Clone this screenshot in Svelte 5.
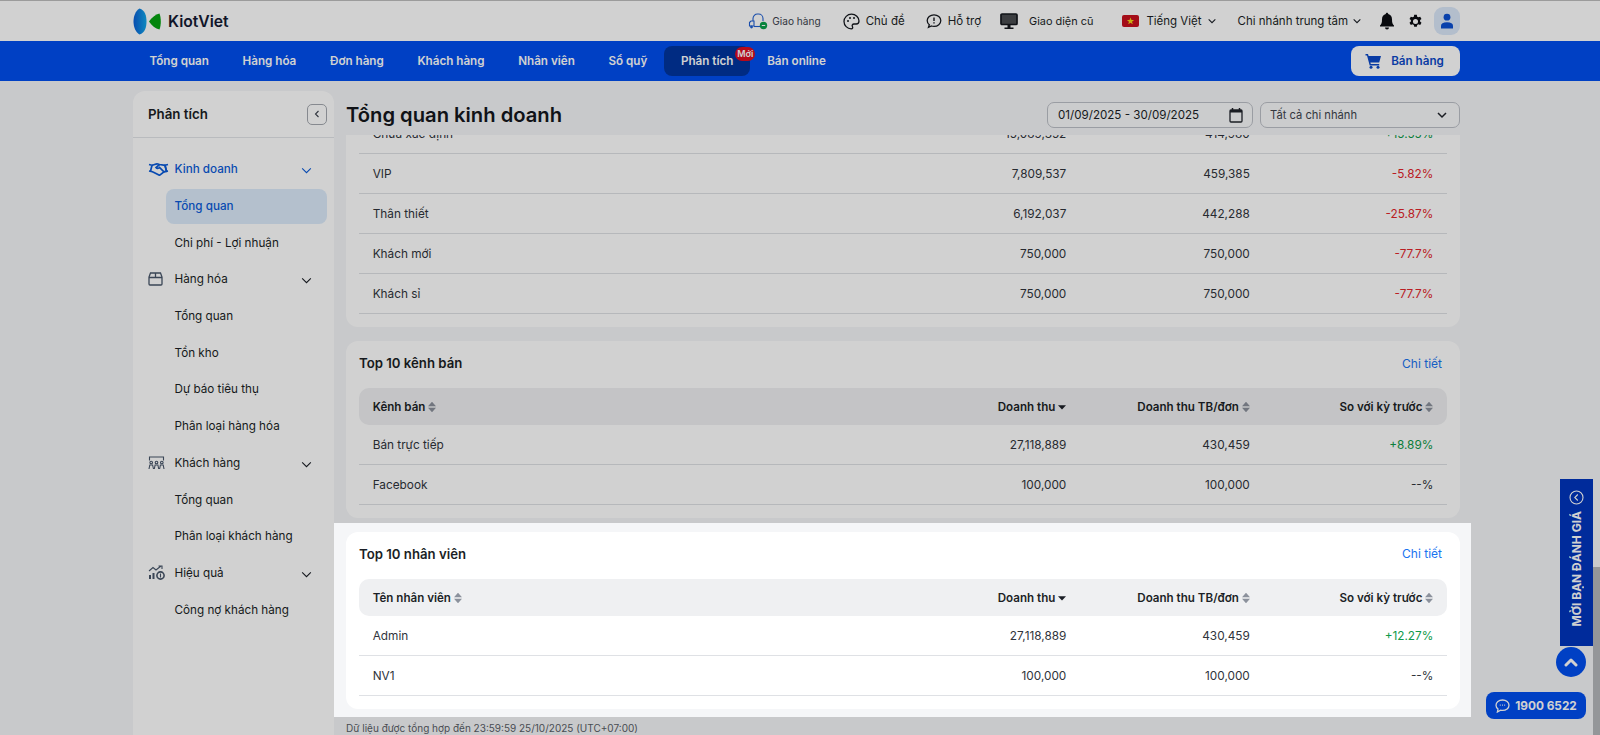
<script>
  const navItems = ['Tổng quan', 'Hàng hóa', 'Đơn hàng', 'Khách hàng', 'Nhân viên', 'Sổ quỹ', 'Phân tích', 'Bán online'];
  const menu = [
    { t: 'Kinh doanh', icon: 'shake', active: true, sub: [['Tổng quan', true], ['Chi phí - Lợi nhuận', false]] },
    { t: 'Hàng hóa', icon: 'box', sub: [['Tổng quan'], ['Tồn kho'], ['Dự báo tiêu thụ'], ['Phân loại hàng hóa']] },
    { t: 'Khách hàng', icon: 'group', sub: [['Tổng quan'], ['Phân loại khách hàng']] },
    { t: 'Hiệu quả', icon: 'chart', sub: [['Công nợ khách hàng']] }
  ];
  const cards = [
    { id: 'a', rows: [
      ['Chưa xác định', '15,089,352', '414,980', '+15.55%', 'up'],
      ['VIP', '7,809,537', '459,385', '-5.82%', 'down'],
      ['Thân thiết', '6,192,037', '442,288', '-25.87%', 'down'],
      ['Khách mới', '750,000', '750,000', '-77.7%', 'down'],
      ['Khách sỉ', '750,000', '750,000', '-77.7%', 'down']
    ] },
    { id: 'b', title: 'Top 10 kênh bán', head: 'Kênh bán', rows: [
      ['Bán trực tiếp', '27,118,889', '430,459', '+8.89%', 'up'],
      ['Facebook', '100,000', '100,000', '--%', '']
    ] },
    { id: 'c', title: 'Top 10 nhân viên', head: 'Tên nhân viên', rows: [
      ['Admin', '27,118,889', '430,459', '+12.27%', 'up'],
      ['NV1', '100,000', '100,000', '--%', '']
    ] }
  ];
</script>

{#snippet sort(active)}
  <svg class="sort" viewBox="0 0 8 12" aria-hidden="true">
    {#if active}
      <path d="M0 4.300h8L4 8.500z" fill="#1b1f26" />
    {:else}
      <path d="M0 5.300L4 .8l4 4.500zM0 6.700l4 4.500 4-4.500z" fill="#8b919c" />
    {/if}
  </svg>
{/snippet}

{#snippet chevron(cls)}
  <svg class={cls} viewBox="0 0 12 12" aria-hidden="true"><path d="M2 4l4 4 4-4" fill="none" stroke="currentColor" stroke-width="1.300" /></svg>
{/snippet}

<div class="page">
  <header class="top">
    <div class="logo">
      <svg width="28" height="27" viewBox="0 0 28 27" aria-hidden="true">
        <defs><linearGradient id="lens" x1="0" x2="1" y1="0" y2="0"><stop offset="0" stop-color="#0a5fd6" /><stop offset="1" stop-color="#12a8ea" /></linearGradient></defs>
        <path d="M6.500 0.500C2.500 3 0.500 8 0.500 13.500S2.500 24 6.500 26.500C12 25 13.500 19 13.500 13.500S12 2 6.500 0.500z" fill="url(#lens)" />
        <path d="M26.500 5.500C22.500 6.500 18.500 9.500 16 13.500c2.500 4 6.500 7 10.500 8 1-2.500 1.300-5.500 1.300-8s-.3-5.500-1.300-8z" fill="#05a311" />
      </svg>
      <span>KiotViet</span>
    </div>
    <div class="tools">
      <span class="tool small i1">
        <svg width="20" height="18" viewBox="0 0 20 18" aria-hidden="true"><path d="M5 9V6.500A4.500 4.500 0 0 1 9.500 2h1A4.500 4.500 0 0 1 15 6.500V9" fill="none" stroke="#1f5fd1" stroke-width="1.100" /><path d="M1.500 10.500l1.500-1.500h3v5H1.500z" fill="none" stroke="#1f5fd1" stroke-width="1.100" /><circle cx="3.500" cy="15" r="1.400" fill="#1f5fd1" /><path d="M6 14.500h6" stroke="#1f5fd1" stroke-width="1.100" /><circle cx="15.500" cy="13.500" r="3.700" fill="#0aa14a" /><path d="M13.800 13.500h3.400" stroke="#fff" /></svg>
        Giao hàng
      </span>
      <span class="tool i2">
        <svg width="17" height="17" viewBox="0 0 17 17" aria-hidden="true"><path d="M8.500 1.200C4.300 1.200 1 4.500 1 8.500s3.300 7.300 7.200 7.300c1.600 0 1.800-1.300 1.200-2.300-.7-1.200.1-2.500 1.500-2.500h2.300c1.700 0 2.800-1.300 2.800-3 0-3.500-3.300-6.800-7.500-6.800z" fill="none" stroke="#15181e" stroke-width="1.300" /><circle cx="5" cy="8" r="1" fill="#15181e" /><circle cx="7" cy="5" r="1" fill="#15181e" /><circle cx="11" cy="5" r="1" fill="#15181e" /></svg>
        Chủ đề
      </span>
      <span class="tool i3">
        <svg width="16" height="16" viewBox="0 0 16 16" aria-hidden="true"><path d="M8 1.800c-3.800 0-6.800 2.500-6.800 5.800 0 1.700.8 3.200 2.100 4.200l-.8 2.500 3-1.300c.8.300 1.600.4 2.500.4 3.800 0 6.800-2.600 6.800-5.800S11.800 1.800 8 1.800z" fill="none" stroke="#15181e" stroke-width="1.300" /><path d="M8 4.500v3.500M8 9.300v1.300" stroke="#15181e" stroke-width="1.400" /></svg>
        Hỗ trợ
      </span>
      <span class="tool i4">
        <svg width="18" height="17" viewBox="0 0 18 17" aria-hidden="true"><rect x="1" y="1" width="16" height="10.500" rx="1" fill="#4a4c50" stroke="#15181e" stroke-width="1.700" /><path d="M7.500 12h3v2.500h-3zM4.500 14.500h9V16h-9z" fill="#15181e" /></svg>
        Giao diện cũ
      </span>
      <span class="tool i5">
        <svg width="17" height="12" viewBox="0 0 17 12" aria-hidden="true"><rect width="17" height="12" rx="2" fill="#c8101e" /><path d="M8.500 2.500l1 2.600h2.600l-2.100 1.600.8 2.600-2.300-1.600-2.300 1.600.8-2.600-2.100-1.600h2.600z" fill="#f7d417" /></svg>
        <span>Tiếng Việt</span>
        {@render chevron('mini')}
      </span>
      <span class="tool i6">
        Chi nhánh trung tâm
        {@render chevron('mini')}
      </span>
      <svg class="bell" width="16" height="18" viewBox="0 0 16 18" aria-hidden="true"><path d="M8 0.800c-.8 0-1.200.6-1.200 1.300C4.500 2.700 3 4.700 3 7.200c0 3.800-.6 5-2 6.300v1h14v-1c-1.400-1.300-2-2.500-2-6.300 0-2.500-1.500-4.500-3.800-5.100C9.200 1.400 8.800.8 8 .8z" fill="#0b0d12" /><path d="M6 15.500h4a2 2 0 0 1-4 0z" fill="#0b0d12" /></svg>
      <svg class="gear" width="15" height="15" viewBox="0 0 16 16" aria-hidden="true"><path fill-rule="evenodd" d="M6.600.8h2.800l.4 2 1.300.7 1.900-.7 1.400 2.400-1.500 1.300v1.500l1.500 1.300-1.400 2.400-1.900-.7-1.300.7-.4 2H6.600l-.4-2-1.300-.7-1.900.7-1.400-2.400 1.500-1.300V6.500L1.600 5.200 3 2.800l1.900.7 1.300-.7zM8 5.300a2.700 2.700 0 1 0 0 5.400 2.700 2.700 0 0 0 0-5.400z" fill="#0b0d12" /></svg>
      <span class="avatar">
        <svg width="14" height="16" viewBox="0 0 14 16" aria-hidden="true"><circle cx="7" cy="4.200" r="3.400" fill="#0c50d2" /><path d="M1 15.500v-2.600C1 10.500 3 9.200 7 9.200s6 1.300 6 3.700v2.600z" fill="#0c50d2" /></svg>
      </span>
    </div>
  </header>

  <nav class="nav">
    {#each navItems as item}
      <span class="navitem" class:on={item === 'Phân tích'}>
        {item}
        {#if item === 'Phân tích'}<span class="badge">Mới</span>{/if}
      </span>
    {/each}
    <span class="sell">
      <svg width="17" height="16" viewBox="0 0 17 16" aria-hidden="true"><path d="M0.500 1h2.500l.6 2H16l-1.800 6.500H5.400l.4 1.500h8.400v1.500H4.700L2 2.500H.5z" fill="#0b49c8" /><circle cx="6" cy="14.200" r="1.500" fill="#0b49c8" /><circle cx="13" cy="14.200" r="1.500" fill="#0b49c8" /></svg>
      Bán hàng
    </span>
  </nav>

  <div class="body">
    <aside class="side">
      <div class="sidehead">
        <span>Phân tích</span>
        <span class="collapse"><svg width="10" height="10" viewBox="0 0 10 10" aria-hidden="true"><path d="M6.500 2L3.500 5l3 3" fill="none" stroke="#3c424d" stroke-width="1.100" /></svg></span>
      </div>
      <div class="menu">
        {#each menu as group}
          <div class="mrow group" class:active={group.active}>
            <span class="micon">
              {#if group.icon === 'shake'}
                <svg width="21" height="14" viewBox="0 0 21 14" aria-hidden="true"><g fill="none" stroke="#0b5bd8" stroke-width="1.700"><path d="M1 2.500l3 .8-1.500 6L1 9M20 2.500l-3 .8 1.500 6 1.500-.3" /><path d="M4 3.300c2-.3 3.500-1.500 5-1.500l2.500.7 5.500.8 1.500 6-2.500.5-4.500 3.500-6-3-2.500-1" /><path d="M11.500 2.500L8 5.500c1 1.300 2.500 1 3.500 0l5 4.800" /></g></svg>
              {:else if group.icon === 'box'}
                <svg width="15" height="14" viewBox="0 0 15 14" aria-hidden="true"><g fill="none" stroke="#48566a" stroke-width="1.300"><path d="M1 5v7a1 1 0 0 0 1 1h11a1 1 0 0 0 1-1V5L12.500 1h-10z" /><path d="M1 5.500h13M7.500 1v4.500" /></g></svg>
              {:else if group.icon === 'group'}
                <svg width="17" height="14" viewBox="0 0 17 14" aria-hidden="true"><g fill="none" stroke="#48566a" stroke-width="1.100"><path d="M1.500 4.500V1h14v3.500" /><circle cx="3.200" cy="6.500" r="1.300" /><circle cx="8.500" cy="6.500" r="1.300" /><circle cx="13.800" cy="6.500" r="1.300" /><path d="M1 13l.8-4h2.800l.9 4M6.300 13l.8-4h2.800l.8 4M11.600 13l.8-4h2.800l.8 4" /></g></svg>
              {:else}
                <svg width="17" height="15" viewBox="0 0 17 15" aria-hidden="true"><g fill="#48566a"><rect x="1" y="10" width="2" height="4" /><rect x="4.500" y="8" width="2" height="6" /></g><path d="M1 6l4-3.500 3 2.500 5-4M10.500 1H14v3" fill="none" stroke="#48566a" stroke-width="1.100" /><circle cx="12.500" cy="10.500" r="3.600" fill="none" stroke="#48566a" stroke-width="1.600" /><path d="M12.500 8.500v4" stroke="#48566a" stroke-width="1.100" /></svg>
              {/if}
            </span>
            <span class="mlabel">{group.t}</span>
            {@render chevron('mchev')}
          </div>
          {#each group.sub as s}
            <div class="mrow sub" class:cur={s[1]}><span>{s[0]}</span></div>
          {/each}
        {/each}
      </div>
    </aside>

    <main class="main">
      <div class="heading">
        <h1>Tổng quan kinh doanh</h1>
        <div class="filters">
          <span class="field date">
            01/09/2025 - 30/09/2025
            <svg width="14" height="16" viewBox="0 0 14 16" aria-hidden="true"><path d="M2 3h10a1 1 0 0 1 1 1v10a1 1 0 0 1-1 1H2a1 1 0 0 1-1-1V4a1 1 0 0 1 1-1z" fill="none" stroke="#20242b" stroke-width="1.300" /><path d="M1 3h12v2.500H1z" fill="#20242b" /><path d="M3.500 1v2M10.500 1v2" stroke="#20242b" stroke-width="1.500" /></svg>
          </span>
          <span class="field branch">
            Tất cả chi nhánh
            <svg width="12" height="12" viewBox="0 0 12 12" aria-hidden="true"><path d="M2 4l4 4 4-4" fill="none" stroke="#20242b" stroke-width="1.500" /></svg>
          </span>
        </div>
      </div>

      <div class="scroller">
        {#each cards as card}
          <section class="card {card.id}">
            {#if card.title}
              <div class="cardhead">
                <h2>{card.title}</h2>
                <span class="more">Chi tiết</span>
              </div>
              <div class="grid thead">
                <span class="c0">{card.head} {@render sort(false)}</span>
                <span>Doanh thu {@render sort(true)}</span>
                <span>Doanh thu TB/đơn {@render sort(false)}</span>
                <span>So với kỳ trước {@render sort(false)}</span>
              </div>
            {/if}
            <div class="rows">
              {#each card.rows as r}
                <div class="grid row">
                  <span class="c0">{r[0]}</span>
                  <span>{r[1]}</span>
                  <span>{r[2]}</span>
                  <span class={r[4]}>{r[3]}</span>
                </div>
              {/each}
            </div>
          </section>
        {/each}
      </div>
      <p class="note">Dữ liệu được tổng hợp đến 23:59:59 25/10/2025 (UTC+07:00)</p>
    </main>
  </div>

  <div class="feedback">
    <span>MỜI BẠN ĐÁNH GIÁ</span>
    <svg width="15" height="15" viewBox="0 0 15 15" aria-hidden="true"><circle cx="7.500" cy="7.500" r="6.500" fill="none" stroke="#fff" stroke-width="1.100" /><path d="M8.800 4.500l-3 3 3 3" fill="none" stroke="#fff" stroke-width="1.100" /></svg>
  </div>
  <div class="uptop">
    <svg width="14" height="10" viewBox="0 0 14 10" aria-hidden="true"><path d="M2 8l5-5 5 5" fill="none" stroke="#fff" stroke-width="3" stroke-linecap="round" stroke-linejoin="round" /></svg>
  </div>
  <div class="phone">
    <svg width="15" height="14" viewBox="0 0 15 14" aria-hidden="true"><path d="M7.500 1C3.800 1 1 3.300 1 6.200c0 1.500.8 2.900 2 3.800l-.6 3 3.200-1.800c.6.100 1.200.2 1.900.2 3.700 0 6.500-2.300 6.500-5.200S11.200 1 7.500 1z" fill="none" stroke="#fff" stroke-width="1.300" /><path d="M4.800 6.200h.9M7 6.200h.9M9.200 6.200h.9" stroke="#fff" stroke-width="1.300" /></svg>
    1900 6522
  </div>
  <div class="thumb"></div>
  <div class="spot"></div>
</div>

<style>
  :global(body) { margin: 0; overflow: hidden; background: #f5f6f8; }
  .page {
    position: relative; width: 1600px; height: 735px; overflow: hidden; background: #f5f6f8;
    font-family: Inter, "Noto Sans", sans-serif; color: #1b1f26; font-size: 11.800px;
  }
  .top {
    height: 40px; border-top: 1px solid #bdbdbd; background: #fff; box-sizing: content-box;
    display: flex; align-items: center; justify-content: space-between; padding: 0 140px 0 133px;
  }
  .logo { display: flex; align-items: center; gap: 7px; font-size: 15.700px; font-weight: 600; color: #141a33; }
  .tools { display: flex; align-items: center; font-size: 11.500px; color: #1b1f26; }
  .tool { display: flex; align-items: center; gap: 6px; white-space: nowrap; }
  .tool.small { font-size: 10.100px; color: #40454e; gap: 4px; }
  .i1 { margin-right: 22px; }
  .i2 { margin-right: 21px; }
  .i3 { margin-right: 19px; }
  .i4 { margin-right: 29px; gap: 11px; font-size: 10.900px; }
  .i5 { margin-right: 21px; gap: 7px; }
  .i6 { margin-right: 17px; }
  .mini { width: 10px; height: 10px; margin-left: -2px; }
  .bell { margin-right: 13px; }
  .gear { margin-right: 11px; }
  .avatar {
    width: 26px; height: 28px; border-radius: 9px; background: #dbe8f9;
    display: flex; align-items: center; justify-content: center;
  }
  .nav {
    height: 39.500px; background: #004ff0; display: flex; align-items: center; padding: 0 140px 0 132.650px;
    color: #fff; font-weight: 600; font-size: 11.650px;
  }
  .navitem { position: relative; padding: 0 16.850px; height: 30px; display: flex; align-items: center; border-radius: 8px; }
  .navitem.on { background: #00359f; }
  .badge {
    position: absolute; right: -5px; top: 1px; background: #de0b20; color: #fff; font-size: 9px; font-weight: 600;
    width: 20px; height: 14px; border-radius: 7px; display: flex; align-items: center; justify-content: center;
  }
  .sell {
    margin-left: auto; width: 109px; height: 30px; box-sizing: border-box; padding-right: 2px; border-radius: 8px; background: #fff; color: #0b49c8;
    display: flex; align-items: center; justify-content: center; gap: 9px;
  }
  .body { display: grid; grid-template-columns: 201px 1114px; gap: 12px; padding: 10.500px 0 0 133px; }
  .side { background: #fff; height: 644px; border-radius: 12px 12px 0 0; }
  .sidehead {
    height: 46px; border-bottom: 1px solid #e2e4e8; display: flex; align-items: center; justify-content: space-between;
    padding: 0 7px 0 15px; font-size: 13.300px; font-weight: 600;
  }
  .collapse {
    width: 18px; height: 19px; border: 1px solid #a4a8af; border-radius: 5px; display: flex; align-items: center; justify-content: center;
  }
  .menu { padding-top: 13px; display: grid; grid-auto-rows: 36.700px; font-size: 11.700px; }
  .mrow { display: flex; align-items: center; position: relative; padding-left: 41.500px; }
  .mlabel { flex: 1; }
  .micon { position: absolute; left: 15px; top: 0; bottom: 0; display: flex; align-items: center; }
  .mchev { width: 13px; height: 13px; margin-right: 21px; margin-top: 3px; }
  .mchev :global(path) { stroke-width: 1; }
  .group.active { color: #0b5bd8; font-weight: 500; }
  .sub { padding-left: 0; }
  .sub span { margin-left: 33px; width: 161px; height: 35px; box-sizing: border-box; padding-left: 8.500px; display: flex; align-items: center; border-radius: 8px; }
  .sub.cur span { background: #dcebfb; color: #0b5bd8; font-weight: 500; }
  .main { min-width: 0; }
  .heading { height: 44px; box-sizing: border-box; padding-top: 2px; display: flex; align-items: center; justify-content: space-between; }
  h1 { margin: 0; font-size: 20.200px; font-weight: 600; color: #14171d; }
  .filters { display: flex; gap: 7px; margin-top: 2px; }
  .field {
    height: 26px; border: 1px solid #bcc0c7; border-radius: 7px; box-sizing: border-box; background: #f8f9fb;
    display: flex; align-items: center; justify-content: space-between; font-size: 11.600px;
  }
  .date { width: 206px; padding: 0 9px 0 10px; }
  .branch { width: 200px; padding: 0 11px 0 9px; color: #40454e; font-size: 11.200px; }
  .scroller { display: flex; flex-direction: column; gap: 14px; }
  .card { background: #fff; border-radius: 12px; padding: 0 13px 12.700px; overflow: hidden; }
  .card.a { border-radius: 0 0 12px 12px; }
  .card.a .rows { margin-top: -20.700px; }
  .cardhead { height: 47px; box-sizing: border-box; padding: 0 5px 3px 0; display: flex; align-items: center; justify-content: space-between; }
  h2 { margin: 0; font-size: 13.200px; font-weight: 600; }
  .more { font-size: 12px; color: #1a73f0; }
  .grid { display: grid; grid-template-columns: 1fr 183.500px 183.500px 183.500px; padding: 0 13.700px; align-items: center; }
  .grid span { text-align: right; white-space: nowrap; }
  .grid .c0 { text-align: left; }
  .thead { height: 37.300px; background: #eff0f2; border-radius: 10px; font-weight: 600; font-size: 11.600px; }
  .sort { width: 8px; height: 12px; vertical-align: -2px; }
  .row { height: 40px; box-sizing: border-box; padding-top: 0; border-bottom: 1px solid #dfe1e5; color: #30343b; }
  .up { color: #0f9a4a; }
  .down { color: #e3252b; }
  .note { margin: 13px 0 0; font-size: 10px; color: #585d66; }
  .feedback {
    position: absolute; left: 1560px; top: 479px; width: 33px; height: 167px; background: #0035bd; color: #fff;
    display: flex; align-items: center; justify-content: space-between; flex-direction: column-reverse; padding: 11px 0 19px; box-sizing: border-box;
    font-weight: 700; font-size: 12px;
  }
  .feedback span { writing-mode: vertical-rl; transform: rotate(180deg); white-space: nowrap; }
  .uptop {
    position: absolute; left: 1556px; top: 647px; width: 30px; height: 30px; border-radius: 50%; background: #004ff0;
    display: flex; align-items: center; justify-content: center;
  }
  .phone {
    position: absolute; left: 1486px; top: 692px; width: 100px; height: 27px; border-radius: 8px; background: #004ff0; color: #fff;
    display: flex; align-items: center; justify-content: center; gap: 5px; font-weight: 700; font-size: 11.800px;
  }
  .thumb { position: absolute; left: 1593px; top: 567px; width: 7px; height: 168px; background: #b5b7bb; }
  .spot {
    position: absolute; left: 334px; top: 523px; width: 1137px; height: 194px;
    box-shadow: 0 0 0 2000px rgba(0, 0, 0, 0.18);
  }
</style>
